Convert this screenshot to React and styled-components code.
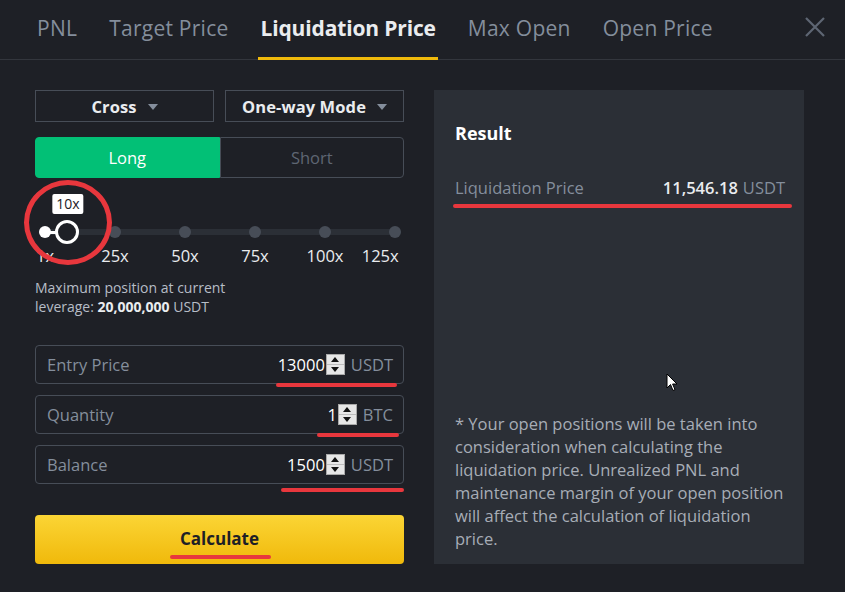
import React from "react"
import styled, { createGlobalStyle } from "styled-components"

const Global = createGlobalStyle`
  html, body { margin: 0; padding: 0; background: #1e2026; }
  body { font-family: "Open Sans", "Liberation Sans", sans-serif; }
  * { box-sizing: border-box; }
`

const Modal = styled.div`
  width: 845px;
  height: 592px;
  background: #1e2026;
  color: #eaecef;
  overflow: hidden;
  position: relative;
`

const Header = styled.div`
  height: 60px;
  display: flex;
  align-items: stretch;
  padding-left: 35px;
  border-bottom: 1px solid #33363d;
`

const Tab = styled.div`
  display: flex;
  align-items: center;
  padding: 0 2px 2px;
  margin-right: 28px;
  font-size: 21px;
  letter-spacing: ${p => (p.$active ? "-0.15px" : "0.25px")};
  color: ${p => (p.$active ? "#eaecef" : "#848e9c")};
  font-weight: ${p => (p.$active ? 700 : 400)};
  border-bottom: 3px solid ${p => (p.$active ? "#f0b90b" : "transparent")};
  margin-bottom: -1px;
  white-space: nowrap;
`

const Close = styled.div`
  margin-left: auto;
  width: 60px;
  display: flex;
  align-items: center;
  justify-content: center;
  padding-bottom: 6px;
`

const Body = styled.div`
  display: flex;
  gap: 30px;
  padding: 30px 0 0 35px;
`

const Left = styled.div`
  width: 369px;
  display: flex;
  flex-direction: column;
`

const SelectRow = styled.div`
  display: flex;
  gap: 11px;
`

const Select = styled.div`
  flex: 1;
  height: 32px;
  border: 1px solid #474d57;
  display: flex;
  align-items: center;
  justify-content: center;
  gap: 11px;
  font-size: 16.5px;
  letter-spacing: 0.1px;
  font-weight: 700;
  color: #eaecef;
`

const Caret = styled.span`
  width: 0;
  height: 0;
  border-left: 5px solid transparent;
  border-right: 5px solid transparent;
  border-top: 6px solid #848e9c;
  margin-top: 1px;
`

const SideRow = styled.div`
  display: flex;
  margin-top: 15px;
  height: 41px;
`

const Side = styled.div`
  flex: 1;
  display: flex;
  align-items: center;
  justify-content: center;
  font-size: 16.5px;
  border-radius: ${p => (p.$active ? "4px 0 0 4px" : "0 4px 4px 0")};
  background: ${p => (p.$active ? "#02c076" : "transparent")};
  color: ${p => (p.$active ? "#ffffff" : "#5e6673")};
  border: 1px solid ${p => (p.$active ? "#02c076" : "#474d57")};
`

const Slider = styled.div`
  position: relative;
  height: 100px;
  margin: 0 9px 0 10px;
`

const Track = styled.div`
  position: absolute;
  left: 0;
  right: 0;
  top: 51px;
  height: 6px;
  border-radius: 3px;
  background: #2b2f36;
`

const Fill = styled.div`
  position: absolute;
  left: 0;
  top: 52.5px;
  height: 3px;
  background: #ffffff;
`

const Dot = styled.div`
  position: absolute;
  top: 48px;
  width: 12px;
  height: 12px;
  margin-left: -6px;
  border-radius: 50%;
  background: ${p => (p.$on ? "#ffffff" : "#474d57")};
`

const Thumb = styled.div`
  position: absolute;
  top: 42px;
  width: 24px;
  height: 24px;
  margin-left: -12px;
  border-radius: 50%;
  background: #1e2026;
  border: 3.5px solid #ffffff;
`

const Tip = styled.div`
  position: absolute;
  top: 16px;
  transform: translateX(-50%);
  background: #ffffff;
  color: #1e2026;
  font-size: 14px;
  padding: 1px 4px;
  line-height: 18px;
  border-radius: 2px;
`

const Mark = styled.div`
  position: absolute;
  top: 66px;
  font-size: 16.5px;
  color: #eaecef;
  transform: ${p => (p.$last ? "translateX(-90%)" : "translateX(-50%)")};
`

const Ring = styled.div`
  position: absolute;
  left: -21px;
  top: 2px;
  width: 88px;
  height: 85px;
  border-radius: 50%;
  border: 5px solid #e8373d;
  pointer-events: none;
`

const MaxText = styled.div`
  font-size: 14px;
  line-height: 19px;
  color: #b7bdc6;
  b { color: #eaecef; font-weight: 700; }
`

const Fields = styled.div`
  display: flex;
  flex-direction: column;
  gap: 11px;
  margin-top: 29px;
`

const Field = styled.div`
  height: 39px;
  border: 1px solid #474d57;
  border-radius: 4px;
  display: flex;
  align-items: center;
  padding: 0 10px 0 11px;
  font-size: 16.5px;
`

const Label = styled.span`
  color: #848e9c;
  flex: 1;
`

const Value = styled.span`
  position: relative;
  display: flex;
  align-items: center;
  color: #ffffff;
`

const Unit = styled.span`
  color: #848e9c;
  margin-left: 6px;
`

const Spin = styled.span`
  display: inline-flex;
  flex-direction: column;
  width: 19px;
  height: 21px;
  background: #e6e6e6;
  border: 1px solid #a9a9a9;
  margin-left: 1px;
`

const SpinHalf = styled.span`
  flex: 1;
  display: flex;
  align-items: center;
  justify-content: center;
  &:first-child { border-bottom: 1px solid #bdbdbd; }
  &::after {
    content: "";
    width: 0;
    height: 0;
    border-left: 4px solid transparent;
    border-right: 4px solid transparent;
    ${p => (p.$up ? "border-bottom: 5px solid #111;" : "border-top: 5px solid #111;")}
  }
`

const Underline = styled.span`
  position: absolute;
  left: ${p => p.$l}px;
  right: ${p => p.$r}px;
  bottom: ${p => p.$b}px;
  height: 4px;
  border-radius: 2px;
  background: #e8373d;
`

const Calc = styled.button`
  margin-top: 31px;
  height: 49px;
  border: none;
  border-radius: 4px;
  background: linear-gradient(180deg, #fbd535 0%, #f0b90b 100%);
  font-family: inherit;
  font-size: 17px;
  font-weight: 700;
  color: #1e2026;
  display: flex;
  align-items: center;
  justify-content: center;
  padding: 0 0 3px;
`

const CalcText = styled.span`
  position: relative;
`

const Panel = styled.div`
  width: 370px;
  height: 474px;
  background: #2b2f36;
  padding: 31px 14px 14px 21px;
  display: flex;
  flex-direction: column;
  position: relative;
`

const Title = styled.div`
  font-size: 18px;
  font-weight: 700;
  color: #ffffff;
  line-height: 24px;
`

const ResultRow = styled.div`
  position: relative;
  display: flex;
  align-items: center;
  margin-top: 31px;
  margin-right: 5px;
  font-size: 16.5px;
  color: #848e9c;
  b { color: #eaecef; font-weight: 600; margin-left: auto; margin-right: 5px; }
`

const Note = styled.div`
  margin-top: auto;
  font-size: 16.5px;
  line-height: 23px;
  color: #a7adb6;
`

const Cursor = styled.svg`
  position: absolute;
  left: 232px;
  top: 283px;
`

export default function App() {
  const marks = ["1x", "25x", "50x", "75x", "100x", "125x"]
  return (
    <Modal>
      <Global />
      <Header>
        <Tab>PNL</Tab>
        <Tab>Target Price</Tab>
        <Tab $active>Liquidation Price</Tab>
        <Tab>Max Open</Tab>
        <Tab>Open Price</Tab>
        <Close>
          <svg width="22" height="22" viewBox="0 0 22 22">
            <path d="M2 2 L20 20 M20 2 L2 20" stroke="#5e6673" strokeWidth="2.2" />
          </svg>
        </Close>
      </Header>
      <Body>
        <Left>
          <SelectRow>
            <Select>Cross <Caret /></Select>
            <Select>One-way Mode <Caret /></Select>
          </SelectRow>
          <SideRow>
            <Side $active>Long</Side>
            <Side>Short</Side>
          </SideRow>
          <Slider>
            <Track />
            <Fill style={{ width: "22px" }} />
            {marks.map((m, i) => (
              <Dot key={m} $on={i === 0} style={{ left: `${i * 20}%` }} />
            ))}
            <Thumb style={{ left: "22px" }} />
            <Tip style={{ left: "23px" }}>10x</Tip>
            {marks.map((m, i) => (
              <Mark key={m} $last={i === 5} style={{ left: `${i * 20}%` }}>{m}</Mark>
            ))}
            <Ring />
          </Slider>
          <MaxText>
            Maximum position at current<br />
            leverage: <b>20,000,000</b> USDT
          </MaxText>
          <Fields>
            <Field>
              <Label>Entry Price</Label>
              <Value>13000<Spin><SpinHalf $up /><SpinHalf /></Spin><Unit>USDT</Unit><Underline $l={-2} $r={-4} $b={-11} /></Value>
            </Field>
            <Field>
              <Label>Quantity</Label>
              <Value>1<Spin><SpinHalf $up /><SpinHalf /></Spin><Unit>BTC</Unit><Underline $l={-10} $r={-6} $b={-11} /></Value>
            </Field>
            <Field>
              <Label>Balance</Label>
              <Value>1500<Spin><SpinHalf $up /><SpinHalf /></Spin><Unit>USDT</Unit><Underline $l={-6} $r={-11} $b={-16} /></Value>
            </Field>
          </Fields>
          <Calc>
            <CalcText>Calculate<Underline $l={-10} $r={-12} $b={-9} /></CalcText>
          </Calc>
        </Left>
        <Panel>
          <Title>Result</Title>
          <ResultRow>
            Liquidation Price
            <b>11,546.18</b>USDT
            <Underline $l={-2} $r={-7} $b={-9} />
          </ResultRow>
          <Note>
            * Your open positions will be taken into consideration when calculating the liquidation price. Unrealized PNL and maintenance margin of your open position will affect the calculation of liquidation price.
          </Note>
          <Cursor width="12" height="19" viewBox="0 0 12 19">
            <path d="M1 1 L1 15 L4.5 11.5 L7 17.5 L9 16.6 L6.6 11 L11 11 Z" fill="#ffffff" stroke="#000000" strokeWidth="1" />
          </Cursor>
        </Panel>
      </Body>
    </Modal>
  )
}
